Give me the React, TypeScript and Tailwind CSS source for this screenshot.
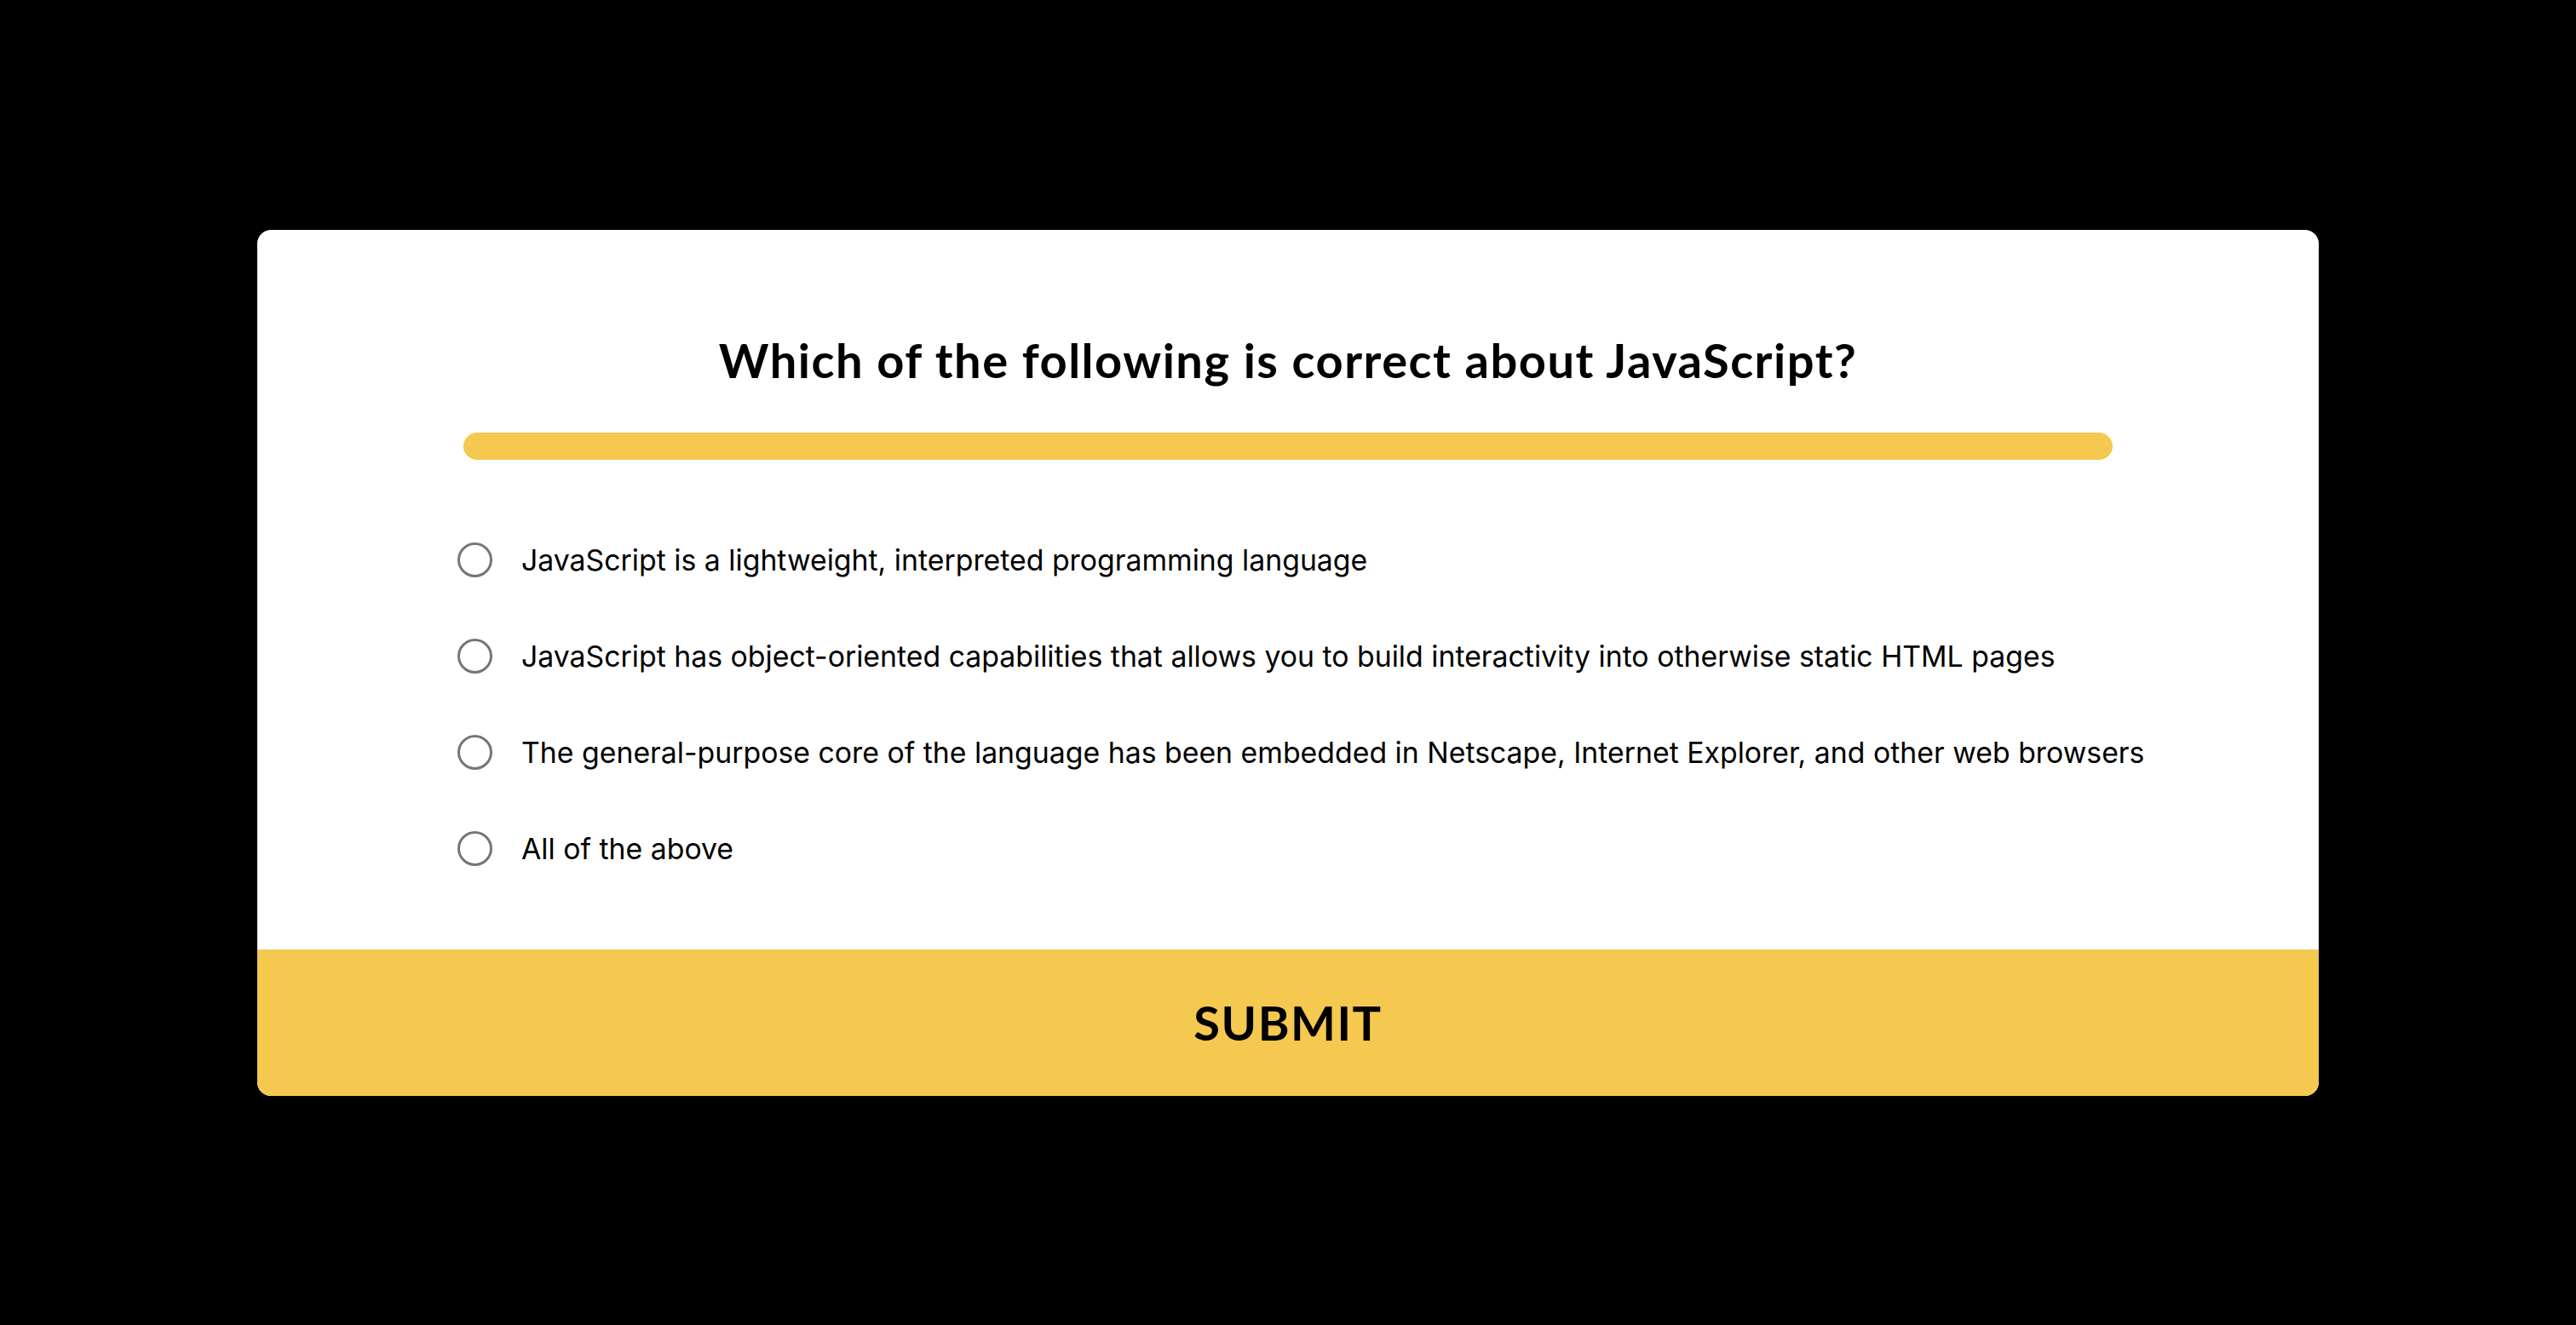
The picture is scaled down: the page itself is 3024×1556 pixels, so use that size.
import React from "react";

const options = [
  "JavaScript is a lightweight, interpreted programming language",
  "JavaScript has object-oriented capabilities that allows you to build interactivity into otherwise static HTML pages",
  "The general-purpose core of the language has been embedded in Netscape, Internet Explorer, and other web browsers",
  "All of the above",
];

export default function App() {
  return (
    <div className="min-h-[1556px] w-full bg-black flex items-center justify-center">
      <div className="w-[2420px] bg-white rounded-[16px] overflow-hidden flex flex-col">
        <div className="flex flex-col items-center pt-[119px] pb-[98px]">
          <h1
            className="text-[56px] leading-[68px] font-bold tracking-[1.5px] text-black"
            style={{ fontFamily: '"Lato", "Liberation Sans", sans-serif' }}
          >
            Which of the following is correct about JavaScript?
          </h1>
          <div className="w-[1936px] h-[32px] rounded-full bg-[#f5c84f] mt-[51px]" />
          <div className="w-[1936px] flex flex-col gap-[72px] mt-[97px]">
            {options.map((o) => (
              <label key={o} className="flex items-center h-[41px] -ml-[7px] cursor-pointer">
                <span className="w-[41px] h-[41px] rounded-full border-[3px] border-[#767676] bg-white shrink-0" />
                <span
                  className="ml-[34px] text-[33.8px] leading-[41px] text-black whitespace-nowrap"
                  style={{ fontFamily: '"Inter", "Noto Sans", sans-serif' }}
                >
                  {o}
                </span>
              </label>
            ))}
          </div>
        </div>
        <button
          className="w-full h-[172px] bg-[#f5c84f] text-black text-[56px] font-bold tracking-[1.5px]"
          style={{ fontFamily: '"Lato", "Liberation Sans", sans-serif' }}
        >
          SUBMIT
        </button>
      </div>
    </div>
  );
}
